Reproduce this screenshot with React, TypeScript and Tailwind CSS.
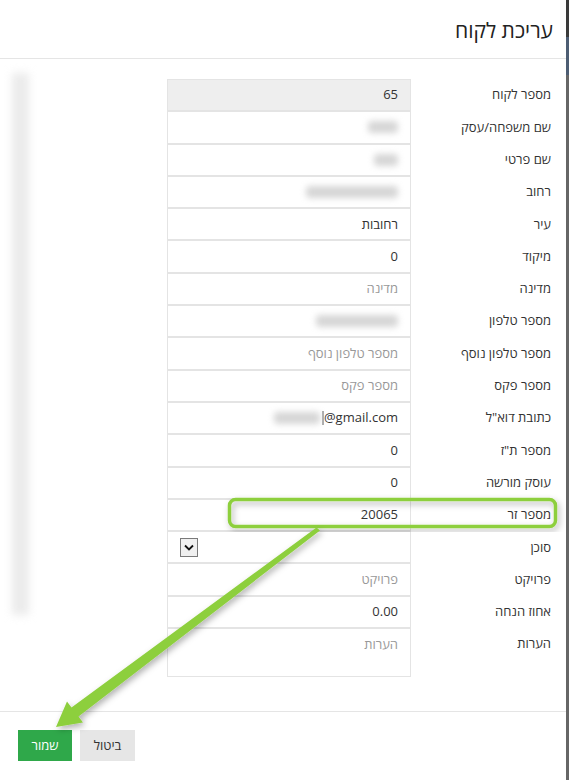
import React from 'react'

type Row = {
  label: string
  value?: string
  placeholder?: string
  blur?: number
  email?: boolean
  readOnly?: boolean
  select?: boolean
  textarea?: boolean
}

const rows: Row[] = [
  { label: 'מספר לקוח', value: '65', readOnly: true },
  { label: 'שם משפחה/עסק', blur: 30 },
  { label: 'שם פרטי', blur: 24 },
  { label: 'רחוב', blur: 92 },
  { label: 'עיר', value: 'רחובות' },
  { label: 'מיקוד', value: '0' },
  { label: 'מדינה', placeholder: 'מדינה' },
  { label: 'מספר טלפון', blur: 82 },
  { label: 'מספר טלפון נוסף', placeholder: 'מספר טלפון נוסף' },
  { label: 'מספר פקס', placeholder: 'מספר פקס' },
  { label: 'כתובת דוא"ל', email: true },
  { label: 'מספר ת"ז', value: '0' },
  { label: 'עוסק מורשה', value: '0' },
  { label: 'מספר זר', value: '20065' },
  { label: 'סוכן', select: true },
  { label: 'פרויקט', placeholder: 'פרויקט' },
  { label: 'אחוז הנחה', value: '0.00' },
  { label: 'הערות', placeholder: 'הערות', textarea: true },
]

function FieldBox({ row }: { row: Row }) {
  const base = 'w-[244px] border border-[#e4e4e4] px-3 flex text-[13px] text-[#333]'
  if (row.textarea) {
    return (
      <div className={`${base} h-[49px] items-start pt-[6px] text-[#999]`}>{row.placeholder}</div>
    )
  }
  return (
    <div
      className={`${base} h-[32.3px] items-center ${row.readOnly ? 'bg-[#eeeeee]' : 'bg-white'} ${
        row.select ? 'justify-end' : ''
      }`}
    >
      {row.value && <span>{row.value}</span>}
      {row.placeholder && <span className="text-[#999]">{row.placeholder}</span>}
      {row.blur && (
        <span
          className="h-[12px] bg-[#d6d6d6] blur-[3px] rounded-sm"
          style={{ width: row.blur }}
        />
      )}
      {row.email && (
        <>
          <span dir="ltr">@gmail.com</span>
          <span className="w-[2px] h-[14px] bg-[#aaa] ml-[2px]" />
          <span className="w-[46px] h-[12px] bg-[#d6d6d6] blur-[3px] rounded-sm" />
        </>
      )}
      {row.select && (
        <span className="w-[18px] h-[19px] border border-[#7a7a7a] bg-[#f0f0f0] flex items-center justify-center">
          <svg width="10" height="7" viewBox="0 0 10 7">
            <path d="M1 1.5 L5 5.5 L9 1.5" fill="none" stroke="#111" strokeWidth="1.8" />
          </svg>
        </span>
      )}
    </div>
  )
}

// green highlight + arrow drawn over the form
function Annotation() {
  return (
    <svg
      className="absolute inset-0 pointer-events-none"
      width="569"
      height="780"
      viewBox="0 0 569 780"
    >
      <defs>
        <filter id="sh" x="-20%" y="-20%" width="140%" height="140%">
          <feDropShadow dx="2" dy="3" stdDeviation="3" floodColor="#000" floodOpacity="0.3" />
        </filter>
      </defs>
      <rect
        x="229.5"
        y="499.5"
        width="326"
        height="27"
        rx="6"
        fill="none"
        stroke="#8dcf3e"
        strokeWidth="3.5"
        filter="url(#sh)"
      />
      <polygon
        points="316.5,527.5 320,530.5 78.5,716.5 83,722.5 56,727 67,701.5 71.5,707.5"
        fill="#8dcf3e"
        filter="url(#sh)"
      />
    </svg>
  )
}

export default function App() {
  return (
    <div className="relative w-[569px] h-[780px] bg-white flex font-['Open_Sans','Liberation_Sans',sans-serif] overflow-hidden">
      <div className="w-[566px] flex flex-col">
        {/* Header */}
        <div
          dir="rtl"
          className="h-[59px] border-b border-[#e5e5e5] flex items-center pr-[13px] pt-[4px]"
        >
          <h1 className="text-[21px] text-[#222]">עריכת לקוח</h1>
        </div>

        {/* Body */}
        <div className="flex pt-[20px] h-[652px]">
          <div className="w-[167px]">
            <div className="ml-[12px] mt-[-6px] w-[17px] h-[542px] bg-[#ebebeb] blur-[4px]" />
          </div>
          <div dir="rtl" className="w-[399px] pr-[15px] flex flex-col">
            {rows.map((row) => (
              <div key={row.label} className="flex items-start">
                <div className="w-[140px] h-[32.3px] flex items-center text-[13px] text-[#333]">
                  {row.label}
                </div>
                <FieldBox row={row} />
              </div>
            ))}
          </div>
        </div>

        {/* Footer */}
        <div className="border-t border-[#e5e5e5] flex gap-[8px] pl-[18px] pt-[18px]">
          <button className="w-[54px] h-[31px] bg-[#2fa84a] text-white text-[13px]">שמור</button>
          <button className="w-[55px] h-[31px] bg-[#e6e6e6] text-[#333] text-[13px]">ביטול</button>
        </div>
      </div>

      {/* page scrollbar edge */}
      <div className="w-[3px] flex flex-col">
        <div className="h-[37px] bg-[#3a3a3a]" />
        <div className="h-[38px] bg-[#4d5d73]" />
        <div className="flex-1 bg-[#666]" />
      </div>

      <Annotation />
    </div>
  )
}
